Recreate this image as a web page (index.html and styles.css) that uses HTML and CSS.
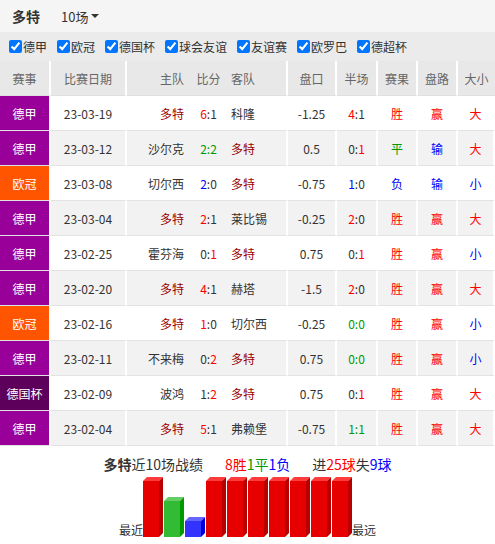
FILE: index.html
```html
<!DOCTYPE html>
<html lang="zh-CN">
<head>
<meta charset="utf-8">
<title>多特 近10场</title>
<link rel="stylesheet" href="styles.css">
</head>
<body>
<div class="page">
  <div class="topbar">
    <span class="team-title">多特</span>
    <span class="select">10场<i class="caret"></i></span>
  </div>
  <div class="filters">
    <label class="flt"><input type="checkbox" checked>德甲</label>
    <label class="flt"><input type="checkbox" checked>欧冠</label>
    <label class="flt"><input type="checkbox" checked>德国杯</label>
    <label class="flt"><input type="checkbox" checked>球会友谊</label>
    <label class="flt"><input type="checkbox" checked>友谊赛</label>
    <label class="flt"><input type="checkbox" checked>欧罗巴</label>
    <label class="flt"><input type="checkbox" checked>德超杯</label>
  </div>
  <table class="tbl">
    <colgroup>
      <col class="c-ev"><col class="c-date"><col class="c-home"><col class="c-score"><col class="c-away"><col class="c-hc"><col class="c-half"><col class="c-res"><col class="c-pl"><col class="c-ou">
    </colgroup>
    <thead>
      <tr>
        <th class="sep">赛事</th><th class="sep">比赛日期</th><th class="home">主队</th><th>比分</th><th class="away sep">客队</th><th class="sep">盘口</th><th class="sep">半场</th><th class="sep">赛果</th><th class="sep">盘路</th><th>大小</th>
      </tr>
    </thead>
    <tbody>
      <tr>
        <td class="ev dj">德甲</td><td>23-03-19</td><td class="home me">多特</td><td><span class="r">6</span>:1</td><td class="away">科隆</td><td>-1.25</td><td><span class="r">4</span>:1</td><td class="r">胜</td><td class="r">赢</td><td class="r">大</td>
      </tr>
      <tr>
        <td class="ev dj">德甲</td><td>23-03-12</td><td class="home">沙尔克</td><td class="g">2:2</td><td class="away me">多特</td><td>0.5</td><td>0:<span class="r">1</span></td><td class="g">平</td><td class="b">输</td><td class="r">大</td>
      </tr>
      <tr>
        <td class="ev ec">欧冠</td><td>23-03-08</td><td class="home">切尔西</td><td><span class="b">2</span>:0</td><td class="away me">多特</td><td>-0.75</td><td><span class="b">1</span>:0</td><td class="b">负</td><td class="b">输</td><td class="b">小</td>
      </tr>
      <tr>
        <td class="ev dj">德甲</td><td>23-03-04</td><td class="home me">多特</td><td><span class="r">2</span>:1</td><td class="away">莱比锡</td><td>-0.25</td><td><span class="r">2</span>:0</td><td class="r">胜</td><td class="r">赢</td><td class="r">大</td>
      </tr>
      <tr>
        <td class="ev dj">德甲</td><td>23-02-25</td><td class="home">霍芬海</td><td>0:<span class="r">1</span></td><td class="away me">多特</td><td>0.75</td><td>0:<span class="r">1</span></td><td class="r">胜</td><td class="r">赢</td><td class="b">小</td>
      </tr>
      <tr>
        <td class="ev dj">德甲</td><td>23-02-20</td><td class="home me">多特</td><td><span class="r">4</span>:1</td><td class="away">赫塔</td><td>-1.5</td><td><span class="r">2</span>:0</td><td class="r">胜</td><td class="r">赢</td><td class="r">大</td>
      </tr>
      <tr>
        <td class="ev ec">欧冠</td><td>23-02-16</td><td class="home me">多特</td><td><span class="r">1</span>:0</td><td class="away">切尔西</td><td>-0.25</td><td class="g">0:0</td><td class="r">胜</td><td class="r">赢</td><td class="b">小</td>
      </tr>
      <tr>
        <td class="ev dj">德甲</td><td>23-02-11</td><td class="home">不来梅</td><td>0:<span class="r">2</span></td><td class="away me">多特</td><td>0.75</td><td class="g">0:0</td><td class="r">胜</td><td class="r">赢</td><td class="b">小</td>
      </tr>
      <tr>
        <td class="ev dfb">德国杯</td><td>23-02-09</td><td class="home">波鸿</td><td>1:<span class="r">2</span></td><td class="away me">多特</td><td>0.75</td><td>0:<span class="r">1</span></td><td class="r">胜</td><td class="r">赢</td><td class="r">大</td>
      </tr>
      <tr>
        <td class="ev dj">德甲</td><td>23-02-04</td><td class="home me">多特</td><td><span class="r">5</span>:1</td><td class="away">弗赖堡</td><td>-0.75</td><td class="g">1:1</td><td class="r">胜</td><td class="r">赢</td><td class="r">大</td>
      </tr>
    </tbody>
  </table>
  <div class="summary">
    <span><b>多特</b>近10场战绩</span>
    <span class="grp"><span class="r">8胜</span><span class="g">1平</span><span class="b">1负</span></span>
    <span class="grp">进<span class="r">25球</span>失<span class="b">9球</span></span>
  </div>
  <div class="chart">
    <span class="cap">最近</span>
    <svg class="bars" width="209" height="60" viewBox="0 0 209 60">
      <g class="bar win" transform="translate(0,0)"><polygon class="top" points="0,4 4,0 20,0 16,4"/><polygon class="side" points="16,4 20,0 20,56 16,60"/><rect class="front" x="0" y="4" width="16" height="56"/></g>
      <g class="bar draw" transform="translate(21,20)"><polygon class="top" points="0,4 4,0 20,0 16,4"/><polygon class="side" points="16,4 20,0 20,36 16,40"/><rect class="front" x="0" y="4" width="16" height="36"/></g>
      <g class="bar loss" transform="translate(42,40)"><polygon class="top" points="0,4 4,0 20,0 16,4"/><polygon class="side" points="16,4 20,0 20,16 16,20"/><rect class="front" x="0" y="4" width="16" height="16"/></g>
      <g class="bar win" transform="translate(63,0)"><polygon class="top" points="0,4 4,0 20,0 16,4"/><polygon class="side" points="16,4 20,0 20,56 16,60"/><rect class="front" x="0" y="4" width="16" height="56"/></g>
      <g class="bar win" transform="translate(84,0)"><polygon class="top" points="0,4 4,0 20,0 16,4"/><polygon class="side" points="16,4 20,0 20,56 16,60"/><rect class="front" x="0" y="4" width="16" height="56"/></g>
      <g class="bar win" transform="translate(105,0)"><polygon class="top" points="0,4 4,0 20,0 16,4"/><polygon class="side" points="16,4 20,0 20,56 16,60"/><rect class="front" x="0" y="4" width="16" height="56"/></g>
      <g class="bar win" transform="translate(126,0)"><polygon class="top" points="0,4 4,0 20,0 16,4"/><polygon class="side" points="16,4 20,0 20,56 16,60"/><rect class="front" x="0" y="4" width="16" height="56"/></g>
      <g class="bar win" transform="translate(147,0)"><polygon class="top" points="0,4 4,0 20,0 16,4"/><polygon class="side" points="16,4 20,0 20,56 16,60"/><rect class="front" x="0" y="4" width="16" height="56"/></g>
      <g class="bar win" transform="translate(168,0)"><polygon class="top" points="0,4 4,0 20,0 16,4"/><polygon class="side" points="16,4 20,0 20,56 16,60"/><rect class="front" x="0" y="4" width="16" height="56"/></g>
      <g class="bar win" transform="translate(189,0)"><polygon class="top" points="0,4 4,0 20,0 16,4"/><polygon class="side" points="16,4 20,0 20,56 16,60"/><rect class="front" x="0" y="4" width="16" height="56"/></g>
    </svg>
    <span class="cap">最远</span>
  </div>
</div>
</body>
</html>
```

FILE: styles.css
```css
html, body {
  margin: 0;
  padding: 0;
  background: #fff;
}
body {
  font-family: "Noto Sans CJK SC", "Microsoft YaHei", sans-serif;
  font-size: 12px;
  color: #333;
}
.page {
  width: 495px;
}
.topbar {
  height: 32px;
  background: #f5f5f5;
  display: flex;
  align-items: center;
  padding-left: 12px;
  box-sizing: border-box;
}
.team-title {
  font-size: 14px;
  font-weight: bold;
  color: #333;
  width: 49px;
}
.select {
  font-size: 13px;
  color: #333;
  display: inline-flex;
  align-items: center;
}
.caret {
  display: inline-block;
  width: 0;
  height: 0;
  border-left: 4px solid transparent;
  border-right: 4px solid transparent;
  border-top: 4px solid #333;
  margin-left: 3px;
}
.filters {
  height: 29px;
  background: #ebebeb;
  display: flex;
  align-items: center;
  gap: 10px;
  padding-left: 9px;
  box-sizing: border-box;
}
.flt {
  display: inline-flex;
  align-items: center;
  color: #333;
  font-size: 12px;
}
.flt input {
  margin: 0 1px 0 0;
  width: 13px;
  height: 13px;
  accent-color: #0075ff;
}
.tbl {
  width: 495px;
  table-layout: fixed;
  border-collapse: separate;
  border-spacing: 0;
}
.c-ev { width: 51px; }
.c-date { width: 76px; }
.c-home { width: 63px; }
.c-score { width: 37px; }
.c-away { width: 61px; }
.c-hc { width: 49px; }
.c-half { width: 41px; }
.c-res { width: 40px; }
.c-pl { width: 40px; }
.c-ou { width: 37px; }
.tbl th {
  height: 34px;
  padding: 0;
  background: #e8e8e8;
  color: #666;
  font-weight: normal;
  font-size: 12px;
  text-align: center;
  border-bottom: 1px solid #e0e0e0;
  white-space: nowrap;
}
.tbl th.sep, .tbl td {
  border-right: 2px solid #fff;
}
.tbl td {
  height: 34px;
  padding: 0;
  text-align: center;
  border-bottom: 1px solid #e2e2e2;
  white-space: nowrap;
  color: #333;
}
.tbl td.home, .tbl td:nth-child(4) {
  border-right: none;
}
.tbl tbody tr:nth-child(even) td {
  background: #f2f2f2;
}
.tbl .home {
  text-align: right;
  padding-right: 6px;
}
.tbl .away {
  text-align: left;
  padding-left: 4px;
}
.tbl td.ev {
  color: #fff;
  border-bottom-color: #e2e2e2;
}
.tbl tbody tr td.dj { background: #990099; }
.tbl tbody tr td.ec { background: #ff5500; }
.tbl tbody tr td.dfb { background: #5c005c; }
.tbl td.me { color: #990000; }
.r { color: #ff0000; }
.g { color: #009900; }
.b { color: #0000ff; }
.tbl td.r { color: #ff0000; }
.tbl td.g { color: #009900; }
.tbl td.b { color: #0000ff; }
.summary {
  display: flex;
  justify-content: center;
  gap: 22px;
  font-size: 14px;
  line-height: 20px;
  padding-top: 8px;
  color: #333;
}
.summary b {
  font-weight: bold;
}
.chart {
  display: flex;
  justify-content: center;
  align-items: flex-end;
  margin-top: 3px;
}
.cap {
  font-size: 12px;
  line-height: 14px;
  color: #333;
}
.bars {
  display: block;
}
.win .front { fill: #e60000; }
.win .top { fill: #ff3b3b; }
.win .side { fill: #b80000; }
.draw .front { fill: #33bb33; }
.draw .top { fill: #66cc66; }
.draw .side { fill: #009900; }
.loss .front { fill: #3333ff; }
.loss .top { fill: #6666ff; }
.loss .side { fill: #0000dd; }
```
